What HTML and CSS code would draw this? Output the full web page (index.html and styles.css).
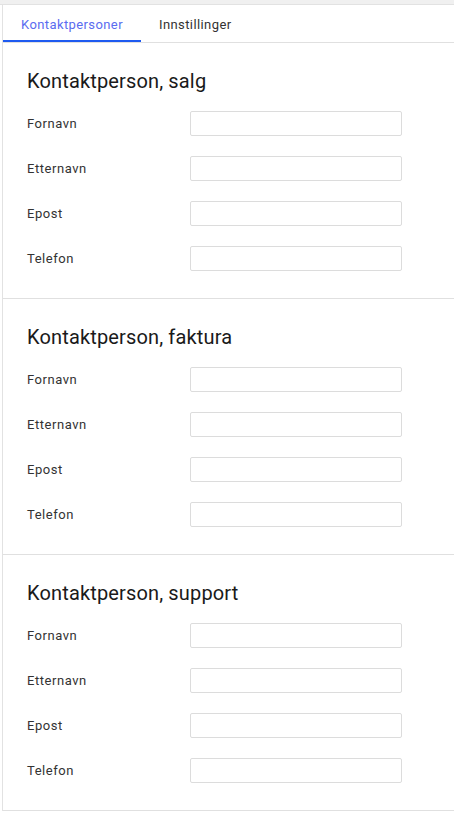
FILE: index.html
```html
<!DOCTYPE html>
<html lang="no">
<head>
    <meta charset="UTF-8">
    <meta name="viewport" content="width=device-width, initial-scale=1.0">
    <title>Kontaktpersoner</title>
    <link rel="stylesheet" href="styles.css">
</head>
<body>
    <div class="topbar"></div>
    <div class="panel">
        <ul class="tabs">
            <li class="active">Kontaktpersoner</li>
            <li>Innstillinger</li>
        </ul>

        <section class="group">
            <h2>Kontaktperson, salg</h2>
            <div class="row"><label>Fornavn</label><input type="text"></div>
            <div class="row"><label>Etternavn</label><input type="text"></div>
            <div class="row"><label>Epost</label><input type="text"></div>
            <div class="row"><label>Telefon</label><input type="text"></div>
        </section>

        <section class="group">
            <h2>Kontaktperson, faktura</h2>
            <div class="row"><label>Fornavn</label><input type="text"></div>
            <div class="row"><label>Etternavn</label><input type="text"></div>
            <div class="row"><label>Epost</label><input type="text"></div>
            <div class="row"><label>Telefon</label><input type="text"></div>
        </section>

        <section class="group">
            <h2>Kontaktperson, support</h2>
            <div class="row"><label>Fornavn</label><input type="text"></div>
            <div class="row"><label>Etternavn</label><input type="text"></div>
            <div class="row"><label>Epost</label><input type="text"></div>
            <div class="row"><label>Telefon</label><input type="text"></div>
        </section>
    </div>
</body>
</html>
```

FILE: styles.css
```css
* {
    margin: 0;
    padding: 0;
    box-sizing: border-box;
}

body {
    font-family: Roboto, "Liberation Sans", sans-serif;
    background-color: #fff;
    color: #222;
}

.topbar {
    height: 5px;
    background-color: #f0f0f0;
    border-bottom: 1px solid #e2e2e2;
}

.panel {
    margin-left: 2px;
    border-left: 1px solid #e2e2e2;
}

.tabs {
    list-style: none;
    display: flex;
    border-bottom: 1px solid #e0e0e0;
    height: 38px;
}

.tabs li {
    font-size: 13px;
    letter-spacing: 0.4px;
    color: #333;
    padding: 12px 18px 0;
    cursor: pointer;
}

.tabs li.active {
    color: #5a6cf0;
    border-bottom: 2px solid #1e5af0;
    width: 138px;
}

.group {
    padding: 26px 0 27px 24px;
    border-bottom: 1px solid #e0e0e0;
}

.group h2 {
    font-size: 20px;
    line-height: 24px;
    font-weight: 400;
    letter-spacing: 0.15px;
    color: #1a1a1a;
    margin-bottom: 18px;
}

.row {
    display: flex;
    align-items: center;
    height: 25px;
    margin-bottom: 20px;
}

.row:last-child {
    margin-bottom: 0;
}

.row label {
    font-size: 13px;
    letter-spacing: 0.55px;
    color: #333;
    width: 163px;
}

.row input {
    width: 212px;
    height: 25px;
    border: 1px solid #dcdcdc;
    border-radius: 2px;
    outline: none;
}
```
